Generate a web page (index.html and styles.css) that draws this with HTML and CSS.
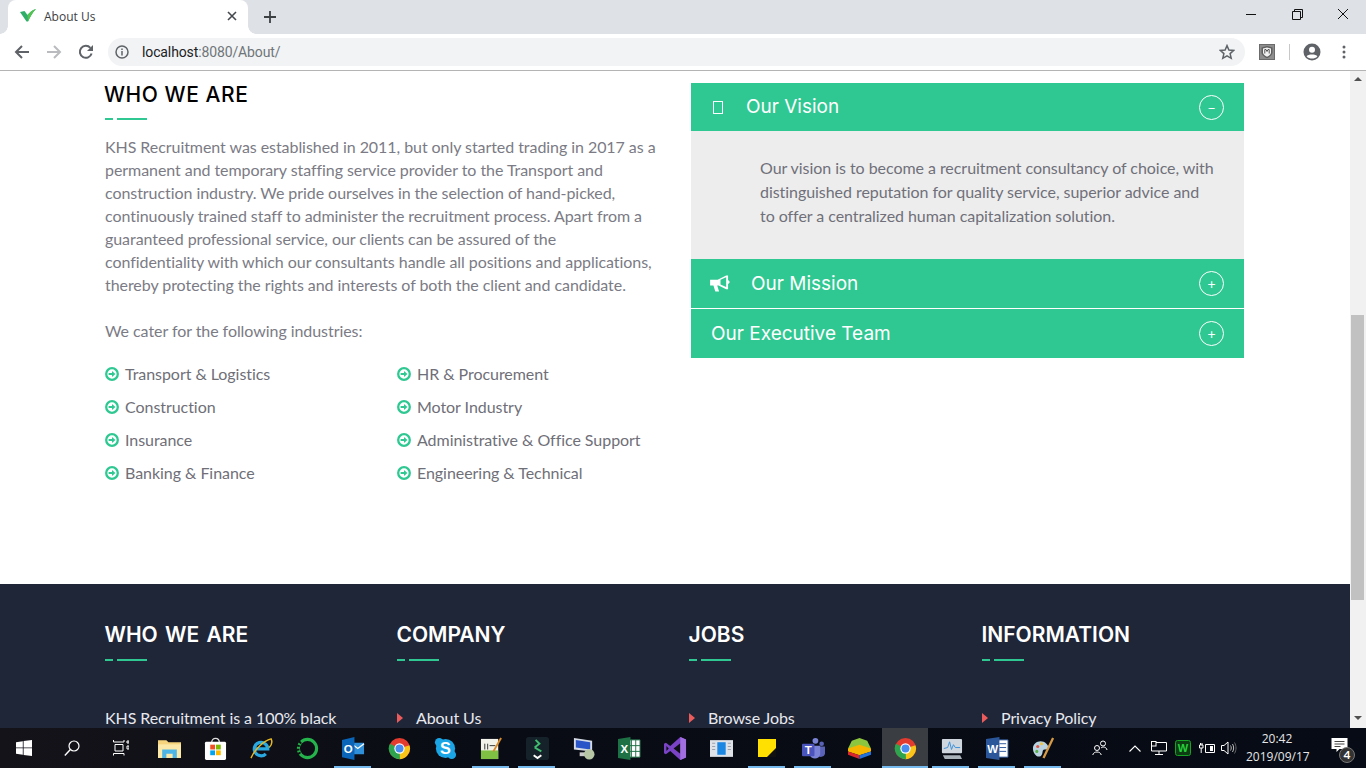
FILE: index.html
```html
<!DOCTYPE html>
<html lang="en">
<head>
    <meta charset="UTF-8">
    <meta name="viewport" content="width=device-width, initial-scale=1.0">
    <title>About Us</title>
    <link rel="stylesheet" href="styles.css">
</head>
<body>

    <svg class="defs" width="0" height="0">
        <symbol id="chrome-logo" viewBox="0 0 24 24">
            <circle cx="12" cy="12" r="11" fill="#e33b2e"/>
            <path d="M12 12 L22.4 8.5 A11 11 0 0 1 9 22.6 Z" fill="#f9c518"/>
            <path d="M12 12 L12.5 23 A11 11 0 0 1 2 7 Z" fill="#2ea44f"/>
            <circle cx="12" cy="12" r="5.4" fill="#fff"/>
            <circle cx="12" cy="12" r="4.2" fill="#4a8cf0"/>
        </symbol>
        <symbol id="arrow-circle" viewBox="0 0 14 14">
            <circle cx="7" cy="7" r="5.8" fill="none" stroke="#2fc892" stroke-width="2.3"/>
            <path d="M3.6 6.1 H7 V3.9 L10.4 7 L7 10.1 V7.9 H3.6 Z" fill="#2fc892"/>
        </symbol>
        <symbol id="caret" viewBox="0 0 6 10">
            <path d="M0 0 L6 5 L0 10 Z" fill="#ec5b5b"/>
        </symbol>
    </svg>

    <div class="browser">
        <div class="tabstrip">
            <div class="tab">
                <svg class="favicon" viewBox="0 0 16 14"><path d="M0 3 L4.5 2 L7.5 6 C9.5 3.5 12 1 16 0 C12.5 3.5 10 8 8 12.5 H6.5 Z" fill="#2fae6a"/><path d="M7.5 6 C9.5 3.5 12 1 16 0 C12.5 3.5 10 8 8 12.5 Z" fill="#55c254"/></svg>
                <span class="tab-title">About Us</span>
                <svg class="tab-close" viewBox="0 0 10 10"><path d="M1 1 L9 9 M9 1 L1 9" stroke="#45484d" stroke-width="1.6"/></svg>
            </div>
            <svg class="new-tab" viewBox="0 0 12 12"><path d="M6 0 V12 M0 6 H12" stroke="#3c4043" stroke-width="1.8"/></svg>
            <div class="window-controls">
                <svg viewBox="0 0 46 14"><path d="M18 7.5 H28" stroke="#111" stroke-width="1"/></svg>
                <svg viewBox="0 0 46 14"><path d="M18.5 4.5 H26.5 V12.5 H18.5 Z M20.5 4.5 V2.5 H28.5 V10.5 H26.5" fill="none" stroke="#111" stroke-width="1"/></svg>
                <svg viewBox="0 0 46 14"><path d="M18 2 L28 12 M28 2 L18 12" stroke="#111" stroke-width="1"/></svg>
            </div>
        </div>

        <div class="toolbar">
            <svg class="nav-btn" viewBox="0 0 16 16"><path d="M15 8 H2 M8 2 L2 8 L8 14" fill="none" stroke="#5f6368" stroke-width="2"/></svg>
            <svg class="nav-btn" viewBox="0 0 16 16"><path d="M1 8 H14 M8 2 L14 8 L8 14" fill="none" stroke="#b9bbbe" stroke-width="2"/></svg>
            <svg class="nav-btn" viewBox="0 0 16 16"><path d="M13.6 9.5 A6 6 0 1 1 12.4 3.9" fill="none" stroke="#5f6368" stroke-width="2"/><path d="M15 1 V7 H9 Z" fill="#5f6368"/></svg>
            <div class="omnibox">
                <svg class="info-icon" viewBox="0 0 14 14"><circle cx="7" cy="7" r="6" fill="none" stroke="#5f6368" stroke-width="1.5"/><path d="M7 6 V10.5 M7 3.4 V5" stroke="#5f6368" stroke-width="1.5"/></svg>
                <span class="url">localhost<span class="url-rest">:8080/About/</span></span>
                <svg class="star-icon" viewBox="0 0 16 16"><path d="M8 1.6 L9.9 6 L14.7 6.4 L11.1 9.6 L12.2 14.3 L8 11.8 L3.8 14.3 L4.9 9.6 L1.3 6.4 L6.1 6 Z" fill="none" stroke="#5f6368" stroke-width="1.5"/></svg>
            </div>
            <div class="ext-icon">
                <svg viewBox="0 0 16 16"><rect x="0.5" y="0.5" width="15" height="15" fill="#8d8d8d" stroke="#6b6b6b"/><path d="M2.5 3.5 L8 2 L13.5 3.5 V8.5 C13.5 11 10.5 13 8 14.2 C5.5 13 2.5 11 2.5 8.5 Z" fill="#5f5f5f"/><path d="M4 4.5 L8 3.4 L12 4.5 V8.5 C12 10.3 10 11.8 8 12.7 C6 11.8 4 10.3 4 8.5 Z" fill="#f2f2f2"/><path d="M5.8 9.5 V5.5 H7 L8 7.5 L9 5.5 H10.2 V9.5" fill="none" stroke="#555"/></svg>
            </div>
            <div class="toolbar-sep"></div>
            <svg class="profile-icon" viewBox="0 0 18 18"><circle cx="9" cy="9" r="8.5" fill="#5f6368"/><circle cx="9" cy="6.8" r="3" fill="#fff"/><path d="M3.6 13.2 C5 10.8 13 10.8 14.4 13.2 C13 15 11 15.6 9 15.6 C7 15.6 5 15 3.6 13.2 Z" fill="#fff"/></svg>
            <svg class="menu-icon" viewBox="0 0 4 14"><circle cx="2" cy="2" r="1.5" fill="#5f6368"/><circle cx="2" cy="7" r="1.5" fill="#5f6368"/><circle cx="2" cy="12" r="1.5" fill="#5f6368"/></svg>
        </div>

        <div class="viewport">
            <div class="page">
                <div class="about">
                    <div class="about-left">
                        <h2 class="section-title">WHO WE ARE</h2>
                        <div class="rule"></div>
                        <p class="about-text">KHS Recruitment was established in 2011, but only started trading in 2017 as a permanent and temporary staffing service provider to the Transport and construction industry. We pride ourselves in the selection of hand-picked, continuously trained staff to administer the recruitment process. Apart from a guaranteed professional service, our clients can be assured of the confidentiality with which our consultants handle all positions and applications, thereby protecting the rights and interests of both the client and candidate.</p>
                        <p class="about-text">We cater for the following industries:</p>
                        <ul class="industries">
                            <li><svg><use href="#arrow-circle"/></svg>Transport &amp; Logistics</li>
                            <li><svg><use href="#arrow-circle"/></svg>HR &amp; Procurement</li>
                            <li><svg><use href="#arrow-circle"/></svg>Construction</li>
                            <li><svg><use href="#arrow-circle"/></svg>Motor Industry</li>
                            <li><svg><use href="#arrow-circle"/></svg>Insurance</li>
                            <li><svg><use href="#arrow-circle"/></svg>Administrative &amp; Office Support</li>
                            <li><svg><use href="#arrow-circle"/></svg>Banking &amp; Finance</li>
                            <li><svg><use href="#arrow-circle"/></svg>Engineering &amp; Technical</li>
                        </ul>
                    </div>

                    <div class="accordion">
                        <div class="acc-head">
                            <span class="tofu"></span>
                            <span class="acc-title acc-title-up">Our Vision</span>
                            <span class="acc-toggle">&minus;</span>
                        </div>
                        <div class="acc-body">Our vision is to become a recruitment consultancy of choice, with distinguished reputation for quality service, superior advice and to offer a centralized human capitalization solution.</div>
                        <div class="acc-head acc-line">
                            <svg class="megaphone" viewBox="0 0 22 18"><path d="M0 5 H8 L17 0.5 H19 V5.5 C21 6 21.5 8.5 19 9.5 V15 H17 L9 11 H7.5 L9.5 17.5 H5.5 L3.5 11 H0 Z" fill="#fff"/><path d="M11 5 L17 2.3 V12.7 L11 10 Z" fill="#2fc892"/></svg>
                            <span class="acc-title">Our Mission</span>
                            <span class="acc-toggle">+</span>
                        </div>
                        <div class="acc-head acc-last">
                            <span class="acc-title">Our Executive Team</span>
                            <span class="acc-toggle">+</span>
                        </div>
                    </div>
                </div>

                <div class="footer">
                    <div class="footer-col">
                        <h3 class="footer-title">WHO WE ARE</h3>
                        <div class="rule"></div>
                        <p class="footer-text">KHS Recruitment is a 100% black</p>
                    </div>
                    <div class="footer-col">
                        <h3 class="footer-title">COMPANY</h3>
                        <div class="rule"></div>
                        <p class="footer-link"><svg><use href="#caret"/></svg>About Us</p>
                    </div>
                    <div class="footer-col">
                        <h3 class="footer-title">JOBS</h3>
                        <div class="rule"></div>
                        <p class="footer-link"><svg><use href="#caret"/></svg>Browse Jobs</p>
                    </div>
                    <div class="footer-col">
                        <h3 class="footer-title">INFORMATION</h3>
                        <div class="rule"></div>
                        <p class="footer-link"><svg><use href="#caret"/></svg>Privacy Policy</p>
                    </div>
                </div>
            </div>

            <div class="scrollbar">
                <div class="scroll-up"></div>
                <div class="scroll-thumb"></div>
                <div class="scroll-down"></div>
            </div>
        </div>
    </div>

    <div class="taskbar">
        <div class="task wide"><svg viewBox="0 0 16 16"><path d="M0 2.2 L6.8 1.2 V7.5 H0 Z M7.6 1.1 L16 0 V7.5 H7.6 Z M0 8.3 H6.8 V14.8 L0 13.8 Z M7.6 8.3 H16 V16 L7.6 14.9 Z" fill="#fff"/></svg></div>
        <div class="task wide"><svg viewBox="0 0 16 16"><circle cx="10" cy="6" r="5" fill="none" stroke="#fff" stroke-width="1.2"/><path d="M6.4 9.6 L0.8 15.4" stroke="#fff" stroke-width="1.4"/></svg></div>
        <div class="task wide"><svg viewBox="0 0 16 16"><path d="M0.5 0 V2 H11 V0 M2 4.5 H10 V11 H2 Z M0.5 15.5 V13.5 H11 V15.5 M14 1 H16 V3 H14 Z M14 6 H16 V9 H14 Z" fill="none" stroke="#fff" stroke-width="1"/></svg></div>
        <div class="task"><svg class="app" viewBox="0 0 22 18"><path d="M0 1 H8 L10 3 H22 V18 H0 Z" fill="#f6d47d"/><path d="M0 5 H22 V18 H0 Z" fill="#fce8a8"/><path d="M4 18 V10 H18 V18 H14 V14 H8 V18 Z" fill="#4cb4e7"/></svg></div>
        <div class="task"><svg class="app" viewBox="0 0 22 24"><path d="M7 6 C7 0 15 0 15 6" fill="none" stroke="#ddd" stroke-width="1.4"/><rect y="5" width="22" height="19" rx="1.5" fill="#fff"/><rect x="5.5" y="8" width="5" height="5" fill="#f25022"/><rect x="11.5" y="8" width="5" height="5" fill="#7fba00"/><rect x="5.5" y="14" width="5" height="5" fill="#00a4ef"/><rect x="11.5" y="14" width="5" height="5" fill="#ffb900"/></svg></div>
        <div class="task"><svg class="app" viewBox="0 0 24 24"><path d="M5.5 12.5 H18.5 A7 7 0 1 0 16.5 17.5" fill="none" stroke="#2aa8e0" stroke-width="3.4"/><path d="M1 22 C5 13 14 4 22 2 C24 6 22 9 20 11" fill="none" stroke="#e8b923" stroke-width="1.5"/></svg></div>
        <div class="task"><svg class="app" viewBox="0 0 24 24"><circle cx="12" cy="12" r="9.5" fill="none" stroke="#25b34b" stroke-width="3.2"/><path d="M5 5 A9.5 9.5 0 0 0 5 19" fill="none" stroke="#0d1310" stroke-width="3.4" stroke-dasharray="2 2"/></svg></div>
        <div class="task open"><svg class="app" viewBox="0 0 24 24"><rect x="10" y="6" width="13" height="12" fill="#2f8fd8"/><path d="M10 7 L16.5 12 L23 7" fill="none" stroke="#fff" stroke-width="1.4"/><path d="M0 3 L13 0 V24 L0 21 Z" fill="#0a64b8"/><text class="app-letter" x="6.5" y="16.5" text-anchor="middle">O</text></svg></div>
        <div class="task"><svg class="app" viewBox="0 0 24 24"><use href="#chrome-logo"/></svg></div>
        <div class="task"><svg class="app" viewBox="0 0 24 24"><circle cx="12" cy="12" r="10" fill="#1aa6e6"/><rect x="1" y="1" width="9" height="9" rx="4.5" fill="#1aa6e6"/><rect x="14" y="14" width="9" height="9" rx="4.5" fill="#1aa6e6"/><text class="skype-letter" x="12" y="18" text-anchor="middle">S</text></svg></div>
        <div class="task open"><svg class="app" viewBox="0 0 24 24"><path d="M1 2 H19 V23 H1 Z" fill="#f2f2ea"/><path d="M1 14 H19 V23 H1 Z" fill="#7fc243"/><path d="M5 7 V13 M8 7 V13 M10 9 H16" stroke="#333" stroke-width="1"/><path d="M14 15 L22 1" stroke="#d98a2b" stroke-width="2"/></svg></div>
        <div class="task open"><svg class="app" viewBox="0 0 24 24"><rect width="24" height="24" rx="3" fill="#16222a"/><path d="M9 11 L14 7 L10 3 M9 11 L16 15" fill="none" stroke="#3fbf6f" stroke-width="2"/><path d="M8 19 L12 22 L16 19" fill="none" stroke="#fff" stroke-width="2"/></svg></div>
        <div class="task"><svg class="app" viewBox="0 0 24 24"><path d="M2 1 L21 4 V15 L2 13 Z" fill="#d5dbe6"/><path d="M4 3 L19 5.5 V13 L4 11 Z" fill="#2a55c9"/><path d="M8 16 H14 V20 H8 Z" fill="#c9c9c9"/><circle cx="18" cy="18" r="5.5" fill="#b7c7a5"/></svg></div>
        <div class="task"><svg class="app" viewBox="0 0 24 24"><path d="M9 3 H23 V21 H9 Z" fill="#fff" stroke="#1e7145"/><path d="M14 3 V21 M18.5 3 V21 M9 9 H23 M9 15 H23" stroke="#1e7145" stroke-width="1"/><path d="M0 2 L13 0 V24 L0 22 Z" fill="#1e7145"/><text class="app-letter" x="6.5" y="16.5" text-anchor="middle">X</text></svg></div>
        <div class="task"><svg class="app" viewBox="0 0 24 24"><path d="M17 0 L23 2.5 V21.5 L17 24 L6.5 14.5 L2 18 L0 17 V7 L2 6 L6.5 9.5 Z" fill="#7a43c6"/><path d="M17 6.5 L10 12 L17 17.5 Z M2.5 9.5 V14.5 L5 12 Z" fill="#0b0f14"/><path d="M17 0 L23 2.5 V21.5 L17 24 Z" fill="#a26fe0"/></svg></div>
        <div class="task"><svg class="app" viewBox="0 0 22 16"><rect width="22" height="16" fill="#dfe3e8"/><rect x="7" y="2" width="8" height="12" fill="#1c86e3"/><path d="M2 3 H5 M2 6 H5 M2 9 H5 M17 3 H20 M17 6 H20 M17 9 H20" stroke="#9aa3ad"/></svg></div>
        <div class="task open"><svg class="sticky" viewBox="0 0 18 18"><rect width="18" height="18" fill="#ffe000"/><path d="M9 18 L18 9 V18 Z" fill="#111"/></svg></div>
        <div class="task open"><svg class="app" viewBox="0 0 24 24"><circle cx="14" cy="4" r="3" fill="#7b83d6"/><circle cx="20.5" cy="7" r="2.4" fill="#5a62b8"/><path d="M16 10 H24 V17 C24 21 18 22 16 19 Z" fill="#5a62b8"/><path d="M8 9 H19 V18 C18 24 9 24 8 18 Z" fill="#7b83d6"/><rect y="7" width="13" height="13" rx="1" fill="#4b53bc"/><text class="app-letter" x="6.5" y="17.5" text-anchor="middle">T</text></svg></div>
        <div class="task"><svg class="app" viewBox="0 0 24 22"><path d="M4 3 L12 0 L20 3 L24 11 L12 15 L0 11 Z" fill="#8cc63f"/><path d="M12 7 L24 11 V14 L12 18 L0 14 V11 Z" fill="#f7b500"/><path d="M0 14 L12 18 V22 L0 17.5 Z" fill="#d9262c"/><path d="M24 14 L12 18 V22 L24 17.5 Z" fill="#2370d8"/></svg></div>
        <div class="task open active"><svg class="app" viewBox="0 0 24 24"><use href="#chrome-logo"/></svg></div>
        <div class="task open"><svg class="app" viewBox="0 0 24 24"><rect x="2" y="2" width="21" height="15" rx="1" fill="#cfd6dd"/><path d="M4 12 L8 11 L10 5 L12 13 L14 8 L16 11 L21 11" fill="none" stroke="#3d8fd8"/><path d="M3 19 H21 L23 23 H5 Z" fill="#aab2ba"/></svg></div>
        <div class="task open"><svg class="app" viewBox="0 0 24 24"><path d="M9 3 H23 V21 H9 Z" fill="#fff" stroke="#2b579a"/><path d="M14 7 H21 M14 11 H21 M14 15 H21" stroke="#2b579a"/><path d="M0 2 L14 0 V24 L0 22 Z" fill="#2b579a"/><text class="app-letter" x="7" y="16.5" text-anchor="middle">W</text></svg></div>
        <div class="task open"><svg class="app" viewBox="0 0 24 24"><path d="M1 12 C1 5 10 2 15 7 C19 11 16 13 13 13 C10 13 12 18 9 20 C5 22 1 17 1 12 Z" fill="#b9d3e0"/><circle cx="6" cy="10" r="1.6" fill="#e35244"/><circle cx="10" cy="7" r="1.6" fill="#f3c33c"/><circle cx="5" cy="15" r="1.6" fill="#5aaf4b"/><path d="M22 1 L12 22" stroke="#d89b45" stroke-width="2.4"/></svg></div>

        <div class="tray">
            <svg class="tray-people" viewBox="0 0 16 16"><circle cx="11" cy="3.5" r="2.5" fill="none" stroke="#fff"/><circle cx="5" cy="8" r="2.5" fill="none" stroke="#fff"/><path d="M0.8 15 C1.2 11 8.8 11 9.2 15 M9 8 C11 6.2 14.5 7 15 10" fill="none" stroke="#fff"/></svg>
            <svg class="tray-chevron" viewBox="0 0 12 7"><path d="M0.5 6.5 L6 1 L11.5 6.5" fill="none" stroke="#fff" stroke-width="1.1"/></svg>
            <svg class="tray-net" viewBox="0 0 16 14"><path d="M4.5 1.5 H15.5 V10 H0.5 V5 M8 10 V13.5 M4 13.5 H12" fill="none" stroke="#fff"/><rect x="0.5" y="0.5" width="4.5" height="4.5" fill="#0b0f14" stroke="#fff"/></svg>
            <svg class="tray-green" viewBox="0 0 16 16"><rect x="0.5" y="0.5" width="15" height="15" rx="2" fill="#0d3d12" stroke="#17a325"/><text class="tray-w" x="8" y="12" text-anchor="middle">W</text></svg>
            <svg class="tray-power" viewBox="0 0 16 12"><path d="M6.5 2.5 H15.5 V10.5 H6.5 Z" fill="none" stroke="#fff"/><rect x="11" y="4" width="3" height="5" fill="#fff"/><path d="M0.5 3 V6 H4 V3 Z M1.5 1 V3 M3 1 V3 M2.2 6 V11" fill="none" stroke="#fff"/></svg>
            <svg class="tray-sound" viewBox="0 0 16 14"><path d="M0.5 4.5 H3 L7 1 V13 L3 9.5 H0.5 Z" fill="none" stroke="#fff"/><path d="M9.5 4.5 C10.5 6 10.5 8 9.5 9.5 M11.5 3 C13 5.5 13 8.5 11.5 11" fill="none" stroke="#bbb"/><path d="M13.5 1.5 C15.5 5 15.5 9 13.5 12.5" fill="none" stroke="#666"/></svg>
            <div class="clock"><div>20:42</div><div>2019/09/17</div></div>
            <div class="notify">
                <svg viewBox="0 0 16 14"><path d="M0 0 H16 V11 H8 L5 14 V11 H0 Z" fill="#fff"/><path d="M3 3.5 H13 M3 6 H13 M3 8.5 H9" stroke="#444"/></svg>
                <span class="notify-count">4</span>
            </div>
        </div>
    </div>

</body>
</html>
```

FILE: styles.css
```css
html, body {
    margin: 0;
    padding: 0;
    height: 100%;
    overflow: hidden;
}

body {
    display: flex;
    flex-direction: column;
    width: 1366px;
    height: 768px;
    font-family: 'Lato', sans-serif;
    background-color: #fff;
}

.defs {
    position: absolute;
}

.browser {
    height: 728px;
    display: flex;
    flex-direction: column;
}

/* Tab strip */
.tabstrip {
    height: 34px;
    flex-shrink: 0;
    display: flex;
    align-items: flex-start;
    padding-left: 8px;
    background-color: #dee1e6;
}

.tab {
    position: relative;
    width: 240px;
    height: 34px;
    box-sizing: border-box;
    display: flex;
    align-items: center;
    padding: 0 11px 2px 12px;
    background-color: #fff;
    border-radius: 8px 8px 0 0;
}

/* little flares at the foot of the active tab */
.tab::before,
.tab::after {
    content: "";
    position: absolute;
    bottom: 0;
    width: 8px;
    height: 8px;
}

.tab::before {
    left: -8px;
    background: radial-gradient(circle at 0 0, #dee1e6 7.5px, #fff 8px);
}

.tab::after {
    right: -8px;
    background: radial-gradient(circle at 100% 0, #dee1e6 7.5px, #fff 8px);
}

.favicon {
    width: 16px;
    height: 14px;
}

.tab-title {
    flex: 1;
    margin-left: 8px;
    font-family: 'Open Sans', sans-serif;
    font-size: 12px;
    color: #3c4043;
}

.tab-close {
    width: 10px;
    height: 10px;
}

.new-tab {
    width: 12px;
    height: 12px;
    margin: 11px 0 0 16px;
}

.window-controls {
    display: flex;
    margin: 7px 0 0 auto;
}

.window-controls svg {
    width: 46px;
    height: 14px;
}

/* Toolbar */
.toolbar {
    height: 36px;
    flex-shrink: 0;
    display: flex;
    align-items: center;
    padding-left: 14px;
    border-bottom: 1px solid #b4b4b4;
    background-color: #fff;
}

.nav-btn {
    width: 16px;
    height: 16px;
    margin-right: 16px;
}

.omnibox {
    width: 1137px;
    height: 28px;
    margin-left: -2px;
    display: flex;
    align-items: center;
    box-sizing: border-box;
    padding: 0 10px 0 7px;
    border-radius: 14px;
    background-color: #f1f3f4;
}

.info-icon {
    width: 14px;
    height: 14px;
}

.url {
    flex: 1;
    margin-left: 13px;
    font-family: 'Roboto', sans-serif;
    font-size: 14px;
    letter-spacing: -0.12px;
    color: #202124;
}

.url-rest {
    color: #70757a;
}

.star-icon {
    width: 16px;
    height: 16px;
}

.ext-icon {
    width: 16px;
    height: 16px;
    margin-left: 14px;
}

.ext-icon svg {
    display: block;
    width: 16px;
    height: 16px;
}

.toolbar-sep {
    width: 1px;
    height: 16px;
    margin-left: 14px;
    background-color: #c8c8c8;
}

.profile-icon {
    width: 18px;
    height: 18px;
    margin-left: 13px;
}

.menu-icon {
    width: 4px;
    height: 14px;
    margin-left: 21px;
}

/* Page */
.viewport {
    flex: 1;
    display: flex;
    min-height: 0;
}

.page {
    width: 1350px;
    flex-shrink: 0;
    overflow: hidden;
}

.about {
    height: 513px;
    box-sizing: border-box;
    display: flex;
    justify-content: space-between;
    padding: 12px 106px 0 105px;
}

.about-left {
    width: 552px;
}

.section-title {
    margin: 0 0 0 -1px;
    font-family: 'Inter', sans-serif;
    font-size: 21px;
    line-height: 23px;
    font-weight: 500;
    letter-spacing: 0.55px;
    color: #000;
}

.footer-title {
    margin: 0 0 0 -0.5px;
    font-family: 'Inter', sans-serif;
    font-size: 21px;
    line-height: 24px;
    font-weight: 600;
    letter-spacing: 0;
    word-spacing: 2px;
    color: #fff;
}

.rule {
    width: 42px;
    height: 2px;
    margin-top: 12px;
    background: linear-gradient(to right, #2fc892 8px, transparent 8px, transparent 12px, #2fc892 12px);
}

.about-text {
    margin: 15px 0 23px;
    font-size: 16px;
    line-height: 23px;
    letter-spacing: -0.06px;
    color: #7b7b85;
}

.about-text + .about-text {
    margin: 0;
}

.industries {
    list-style: none;
    margin: 15px 0 0;
    padding: 0;
    display: grid;
    grid-template-columns: 292px 1fr;
    grid-auto-rows: 33px;
}

.industries li {
    display: flex;
    align-items: center;
    font-size: 16px;
    letter-spacing: -0.05px;
    color: #6f6f78;
}

.industries svg {
    width: 14px;
    height: 14px;
    margin-right: 6px;
    flex-shrink: 0;
}

/* Accordion */
.accordion {
    width: 553px;
}

.acc-head {
    height: 48px;
    box-sizing: border-box;
    display: flex;
    align-items: center;
    padding: 0 20px;
    background-color: #2fc892;
    color: #fff;
}

.acc-line {
    height: 50px;
    border-bottom: 1px solid #fff;
}

.acc-last {
    height: 49px;
}

.acc-title {
    flex: 1;
    font-family: 'Inter', sans-serif;
    font-size: 19px;
}

.acc-title-up {
    margin-top: -2px;
}

.tofu {
    width: 10px;
    height: 13px;
    margin: 0 23px 0 2px;
    box-sizing: border-box;
    border: 1px solid #fff;
}

.megaphone {
    width: 21px;
    height: 17px;
    margin-right: 20px;
    margin-left: -1px;
}

.acc-toggle {
    width: 25px;
    height: 25px;
    box-sizing: border-box;
    border: 1px solid #fff;
    border-radius: 50%;
    display: flex;
    align-items: center;
    justify-content: center;
    font-size: 14px;
    color: #fff;
}

.acc-body {
    height: 128px;
    box-sizing: border-box;
    padding: 25px 30px 0 69px;
    background-color: #ededed;
    font-size: 16px;
    line-height: 24px;
    letter-spacing: -0.05px;
    color: #70707a;
}

/* Footer */
.footer {
    height: 144px;
    box-sizing: border-box;
    display: grid;
    grid-template-columns: 292px 292px 293px 292px;
    padding: 39px 0 0 105px;
    background-color: #1f2638;
}

.footer-text,
.footer-link {
    margin: 47px 0 0;
    display: flex;
    align-items: center;
    font-size: 16px;
    line-height: 20px;
    letter-spacing: -0.08px;
    color: #e8e9ee;
}

.footer-link svg {
    width: 6px;
    height: 10px;
    margin-right: 13px;
}

/* Scrollbar */
.scrollbar {
    width: 16px;
    display: flex;
    flex-direction: column;
    align-items: center;
    background-color: #f1f1f1;
}

.scroll-up,
.scroll-down {
    width: 0;
    height: 0;
    border-left: 4px solid transparent;
    border-right: 4px solid transparent;
}

.scroll-up {
    margin-top: 6px;
    border-bottom: 4px solid #505050;
}

.scroll-down {
    margin-top: 116px;
    border-top: 4px solid #505050;
}

.scroll-thumb {
    width: 13px;
    height: 285px;
    margin-top: 234px;
    align-self: flex-start;
    margin-left: 1px;
    background-color: #c1c1c1;
}

/* Taskbar */
.taskbar {
    height: 40px;
    flex-shrink: 0;
    display: flex;
    align-items: stretch;
    background: linear-gradient(to right, #15131a, #090c14 35%, #070b15);
}

.task {
    position: relative;
    width: 46px;
    display: flex;
    align-items: center;
    justify-content: center;
}

.task.wide {
    width: 48px;
}

.task.wide:nth-child(3) {
    width: 50px;
}

.task svg {
    width: 16px;
    height: 16px;
}

.task svg.app {
    width: 23px;
    height: 23px;
}

.task svg.sticky {
    width: 18px;
    height: 18px;
}

.task.open::after {
    content: "";
    position: absolute;
    left: 4px;
    right: 5px;
    bottom: 0;
    height: 2px;
    background-color: #76b9ed;
}

.task.active {
    background-color: #3a3d42;
}

.task.active::after {
    left: 0;
    right: 0;
}

.app-letter {
    font-family: 'Liberation Sans', sans-serif;
    font-size: 12px;
    font-weight: bold;
    fill: #fff;
}

.skype-letter {
    font-family: 'Liberation Sans', sans-serif;
    font-size: 17px;
    font-weight: bold;
    fill: #fff;
}

.tray {
    flex: 1;
    display: flex;
    align-items: center;
    color: #fff;
}

.tray-people {
    width: 16px;
    height: 16px;
    margin-left: 26px;
}

.tray-chevron {
    width: 12px;
    height: 7px;
    margin-left: 21px;
}

.tray-net {
    width: 16px;
    height: 14px;
    margin-left: 10px;
}

.tray-green {
    width: 16px;
    height: 16px;
    margin-left: 8px;
}

.tray-w {
    font-family: 'Liberation Sans', sans-serif;
    font-size: 11px;
    font-weight: bold;
    fill: #25d13a;
}

.tray-power {
    width: 16px;
    height: 12px;
    margin-left: 8px;
}

.tray-sound {
    width: 16px;
    height: 14px;
    margin-left: 6px;
}

.clock {
    width: 62px;
    margin-left: 9px;
    text-align: center;
    font-family: 'Open Sans', sans-serif;
    font-size: 12px;
    line-height: 18px;
    color: #e6e6e6;
}

.notify {
    position: relative;
    margin-left: 23px;
    margin-top: -6px;
    width: 17px;
    height: 14px;
}

.notify svg {
    display: block;
    width: 17px;
    height: 14px;
}

.notify-count {
    position: absolute;
    left: 8px;
    top: 9px;
    width: 16px;
    height: 16px;
    box-sizing: border-box;
    border: 1px solid #777;
    border-radius: 50%;
    background-color: #333;
    text-align: center;
    font-size: 12px;
    font-weight: bold;
    line-height: 14px;
    color: #fff;
}
```
